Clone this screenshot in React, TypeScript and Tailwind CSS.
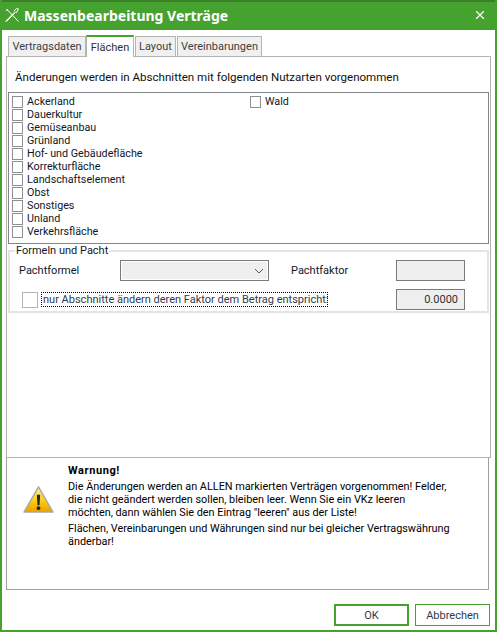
import { X } from "lucide-react";

const leftItems = [
  "Ackerland",
  "Dauerkultur",
  "Gemüseanbau",
  "Grünland",
  "Hof- und Gebäudefläche",
  "Korrekturfläche",
  "Landschaftselement",
  "Obst",
  "Sonstiges",
  "Unland",
  "Verkehrsfläche",
];

const tabs = [
  { label: "Vertragsdaten", box: "w-[78px]" },
  { label: "Flächen", box: "w-[48px]" },
  { label: "Layout", box: "ml-px w-[41px]" },
  { label: "Vereinbarungen", box: "ml-px w-[85px]" },
];

function CheckRow({ label }: { label: string }) {
  return (
    <div className="flex h-[13px] items-center gap-[4px]">
      <span className="h-[12px] w-[11px] shrink-0 border border-[#8f8f8f] bg-white" />
      <span className="whitespace-nowrap text-[10.75px] text-[#101828]">{label}</span>
    </div>
  );
}

function AppLogo() {
  return (
    <svg width="14" height="14" viewBox="0 0 14 14" fill="none" stroke="white" strokeWidth="1" className="shrink-0">
      <path d="M0.5 13.5 L10 3.5" />
      <path d="M1.5 13.5 L10.5 4.5" />
      <path d="M2 1.5 L13.5 13.5" />
      <path d="M9 3 L11.5 0.5 L13.5 1 L11 5" />
      <path d="M1 3 L3 1" />
    </svg>
  );
}

function WarningIcon() {
  return (
    <svg width="31" height="28" viewBox="0 0 32 29">
      <defs>
        <linearGradient id="warn" x1="0" y1="0" x2="0" y2="1">
          <stop offset="0" stopColor="#fff2a0" />
          <stop offset="0.6" stopColor="#fbc80c" />
          <stop offset="1" stopColor="#e8a000" />
        </linearGradient>
      </defs>
      <path d="M16 1 L31 27 L1 27 Z" fill="url(#warn)" stroke="#a8a8a8" strokeWidth="1.5" strokeLinejoin="round" />
      <path d="M14.3 9 H17.7 L17 20 H15 Z" fill="#222" />
      <circle cx="16" cy="23" r="1.9" fill="#222" />
    </svg>
  );
}

export default function App() {
  return (
    <div className="flex h-[632px] w-[497px] flex-col overflow-hidden border-x-2 border-b-2 border-[#45a22e] bg-white font-['Roboto',sans-serif] text-[11px] leading-[13px] text-[#101010]">
      {/* Title bar */}
      <header className="-mx-[2px] flex h-[30px] shrink-0 items-center border-t-2 border-[#3b7f2a] bg-[#45a22e] pb-[2px] pl-[5px] pr-[10px] font-['Noto_Sans',sans-serif] text-white">
        <AppLogo />
        <h1 className="ml-[5px] text-[14px] font-bold">Massenbearbeitung Verträge</h1>
        <X size={14} strokeWidth={2} className="ml-auto" />
      </header>

      {/* Tabs */}
      <nav className="ml-[6px] mt-[5px] flex h-[21px] items-end">
        {tabs.map((tab) =>
          tab.label === "Flächen" ? (
            <div
              key={tab.label}
              className={`z-10 -mb-px flex h-[22px] ${tab.box} items-center justify-center border-x border-t-2 border-x-[#b4b4b4] border-t-[#45a22e] bg-white text-[#303030]`}
            >
              {tab.label}
            </div>
          ) : (
            <div
              key={tab.label}
              className={`flex h-[20px] ${tab.box} items-center justify-center border-x border-t border-[#b4b4b4] bg-[#f0f0f0] text-[#404040]`}
            >
              {tab.label}
            </div>
          ),
        )}
      </nav>

      {/* Tab page */}
      <section className="mx-[4px] h-[402px] shrink-0 border border-[#b4b4b4] px-[1px]">
        <p className="ml-[7px] mt-[14px] h-[15px] whitespace-nowrap text-[11.55px]">
          Änderungen werden in Abschnitten mit folgenden Nutzarten vorgenommen
        </p>
        <div className="mt-[6px] flex h-[152px] border border-[#82878c] pl-[3px] pt-[2px]">
          <div className="w-[238px]">
            {leftItems.map((item) => (
              <CheckRow key={item} label={item} />
            ))}
          </div>
          <CheckRow label="Wald" />
        </div>

        <fieldset className="h-[69px] border-2 border-[#e4e4e4]">
          <legend className="ml-[5px] px-[1px] text-[#101828]">Formeln und Pacht</legend>
          <div className="mt-[3px] flex items-center">
            <span className="ml-[9px] w-[101px] text-[#101828]">Pachtformel</span>
            <div className="flex h-[21px] w-[149px] items-center justify-end border border-[#7a7a7a] bg-[#efefef] pr-[4px] outline outline-1 -outline-offset-2 outline-white">
              <svg width="10" height="6" viewBox="0 0 10 6" fill="none" stroke="#555" strokeWidth="1">
                <path d="M1 1 L5 5 L9 1" />
              </svg>
            </div>
            <span className="ml-[22px] w-[105px] text-[#101828]">Pachtfaktor</span>
            <div className="h-[21px] w-[69px] border border-[#7a7a7a] bg-[#efefef]" />
          </div>
          <div className="mt-[8px] flex items-center">
            <span className="ml-[12px] h-[16px] w-[16px] border border-[#b4b4b4] bg-white" />
            <span className="ml-[3px] w-[355px]">
              <span className="inline-block h-[15px] w-[287px] whitespace-nowrap border border-dotted border-black pl-px text-[#303a4a]">
                nur Abschnitte ändern deren Faktor dem Betrag entspricht:
              </span>
            </span>
            <div className="flex h-[21px] w-[69px] items-center justify-end border border-[#7a7a7a] bg-[#efefef] pr-[6px] text-[#303030]">
              0.0000
            </div>
          </div>
        </fieldset>
      </section>

      {/* Warning */}
      <section className="ml-[4px] mr-[6px] flex h-[132px] shrink-0 border border-t-0 border-[#a0a0a0]">
        <div className="flex w-[47px] justify-end pt-[28px]">
          <WarningIcon />
        </div>
        <div className="ml-[14px] w-[392px] pt-[6px] text-[10.85px] text-black">
          <p className="text-[11px] font-bold tracking-[0.6px]">Warnung!</p>
          <p className="mt-[3px] w-[384px]">
            Die Änderungen werden an ALLEN markierten Verträgen vorgenommen! Felder, die nicht geändert werden sollen, bleiben leer. Wenn Sie ein VKz leeren möchten, dann wählen Sie den Eintrag "leeren" aus der Liste!
          </p>
          <p className="mt-[3px]">Flächen, Vereinbarungen und Währungen sind nur bei gleicher Vertragswährung änderbar!</p>
        </div>
      </section>

      {/* Buttons */}
      <footer className="mr-[5px] mt-[14px] flex justify-end gap-[6px] text-[#303a4a]">
        <button className="h-[22px] w-[75px] border-[2px] border-[#45a22e]">OK</button>
        <button className="h-[22px] w-[75px] border border-[#45a22e]">Abbrechen</button>
      </footer>
    </div>
  );
}
